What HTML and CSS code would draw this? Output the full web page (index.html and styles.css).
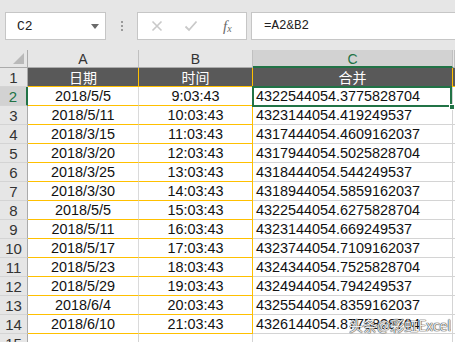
FILE: index.html
```html
<!DOCTYPE html>
<html>
<head>
<meta charset="utf-8">
<link rel="stylesheet" href="styles.css">
</head>
<body>
<div class="app">
  <div class="fbar">
    <div class="namebox"><span class="nm">C2</span><span class="caret"></span></div>
    <div class="grip"><i></i><i></i><i></i></div>
    <div class="fxbox">
      <svg width="12" height="12" viewBox="0 0 12 12" class="ic"><path d="M1.5 1.5 L10.5 10.5 M10.5 1.5 L1.5 10.5" stroke="#c9c9c9" stroke-width="1.6" fill="none"/></svg>
      <svg width="14" height="12" viewBox="0 0 14 12" class="ic"><path d="M1.5 6.5 L5 10 L12.5 1.5" stroke="#c9c9c9" stroke-width="1.8" fill="none"/></svg>
      <span class="fx">f<sub>x</sub></span>
    </div>
    <div class="formula">=A2&amp;B2</div>
  </div>
  <div class="sheet">
    <div class="corner"><span class="tri"></span></div>
    <div class="ch">A</div>
    <div class="ch">B</div>
    <div class="ch sel">C</div>
    <div class="ch d"></div>

    <div class="rh">1</div>
    <div class="hd">日期</div>
    <div class="hd">时间</div>
    <div class="hd">合并</div>
    <div class="hd d"></div>

    <div class="rh rsel">2</div><div class="a">2018/5/5</div><div class="b">9:03:43</div><div class="c">4322544054.3775828704</div><div class="dd"></div>
    <div class="rh">3</div><div class="a">2018/5/11</div><div class="b">10:03:43</div><div class="c">4323144054.419249537</div><div class="dd"></div>
    <div class="rh">4</div><div class="a">2018/3/15</div><div class="b">11:03:43</div><div class="c">4317444054.4609162037</div><div class="dd"></div>
    <div class="rh">5</div><div class="a">2018/3/20</div><div class="b">12:03:43</div><div class="c">4317944054.5025828704</div><div class="dd"></div>
    <div class="rh">6</div><div class="a">2018/3/25</div><div class="b">13:03:43</div><div class="c">4318444054.544249537</div><div class="dd"></div>
    <div class="rh">7</div><div class="a">2018/3/30</div><div class="b">14:03:43</div><div class="c">4318944054.5859162037</div><div class="dd"></div>
    <div class="rh">8</div><div class="a">2018/5/5</div><div class="b">15:03:43</div><div class="c">4322544054.6275828704</div><div class="dd"></div>
    <div class="rh">9</div><div class="a">2018/5/11</div><div class="b">16:03:43</div><div class="c">4323144054.669249537</div><div class="dd"></div>
    <div class="rh">10</div><div class="a">2018/5/17</div><div class="b">17:03:43</div><div class="c">4323744054.7109162037</div><div class="dd"></div>
    <div class="rh">11</div><div class="a">2018/5/23</div><div class="b">18:03:43</div><div class="c">4324344054.7525828704</div><div class="dd"></div>
    <div class="rh">12</div><div class="a">2018/5/29</div><div class="b">19:03:43</div><div class="c">4324944054.794249537</div><div class="dd"></div>
    <div class="rh">13</div><div class="a">2018/6/4</div><div class="b">20:03:43</div><div class="c">4325544054.8359162037</div><div class="dd"></div>
    <div class="rh">14</div><div class="a">2018/6/10</div><div class="b">21:03:43</div><div class="c">4326144054.8775828704</div><div class="dd"></div>
    <div class="rh">15</div><div class="e"></div><div class="e"></div><div class="e"></div><div class="dd"></div>

    <div class="selbox"><span class="handle"></span></div>
    <div class="wm">头条@彩虹Excel</div>
  </div>
</div>
</body>
</html>
```
FILE: styles.css
```css
* { box-sizing: border-box; }
html, body { margin: 0; padding: 0; }
body { width: 455px; height: 342px; overflow: hidden; background: #e6e6e6; font-family: "Liberation Sans", Arial, "Noto Sans CJK SC", sans-serif; }
.app { width: 455px; height: 342px; }
.fbar { height: 50px; display: flex; align-items: flex-start; padding-top: 12px; }
.namebox { margin-left: 5px; width: 101px; height: 28px; background: #fff; border: 1px solid #c6c6c6; display: flex; align-items: center; justify-content: space-between; padding: 0 6px 0 11px; }
.nm { font-family: "Liberation Mono", monospace; font-size: 13px; color: #222; }
.caret { width: 0; height: 0; border-left: 4px solid transparent; border-right: 4px solid transparent; border-top: 5px solid #6a6a6a; }
.grip { width: 31px; height: 28px; display: flex; flex-direction: column; align-items: center; justify-content: center; gap: 2px; }
.grip i { width: 2px; height: 2px; background: #9a9a9a; display: block; }
.fxbox { width: 110px; height: 28px; background: #fff; border: 1px solid #c6c6c6; display: flex; align-items: center; padding-left: 13px; gap: 21px; }
.fx { font-family: "Liberation Serif", serif; font-style: italic; font-size: 15px; color: #6b6b6b; margin-left: 4px; }
.fx sub { font-size: 10px; vertical-align: -1px; }
.formula { margin-left: 4px; flex: 1; height: 28px; background: #fff; border: 1px solid #c6c6c6; border-right: 0; font-family: "Liberation Mono", monospace; font-size: 12.5px; color: #222; padding-left: 12px; line-height: 26px; }

.sheet { position: relative; display: grid; grid-template-columns: 28px 111px 114px 200px 2px; grid-template-rows: 18px 19px repeat(13, 19px) 19px; }
.sheet > div { font-size: 14.4px; line-height: 19px; white-space: nowrap; overflow: hidden; }
.corner { background: #e6e6e6; border-right: 1px solid #ababab; border-bottom: 1px solid #ababab; position: relative; }
.tri { position: absolute; right: 3px; bottom: 3px; width: 0; height: 0; border-left: 11px solid transparent; border-bottom: 11px solid #b9b9b9; }
.ch { background: #e6e6e6; border-right: 1px solid #c0c0c0; border-bottom: 1px solid #ababab; text-align: center; color: #333; font-size: 14px !important; line-height: 18px !important; }
.ch.sel { background: #d2d2d2; border-bottom: 2px solid #217346; color: #217346; }
.rh { background: #e6e6e6; border-right: 1px solid #ababab; border-bottom: 1px solid #d4d4d4; text-align: center; color: #333; font-size: 15px !important; }
.rh.rsel { background: #d2d2d2; border-right: 2px solid #217346; color: #217346; }
.hd { background: #595959; color: #fff; text-align: center; border-right: 1px solid #ffc000; border-bottom: 1px solid #ffc000; font-family: "Noto Sans CJK SC", sans-serif; font-size: 14px !important; line-height: 18px !important; }
.hd.d { border-right: 0; }
.a { background: #fff; text-align: center; color: #111; border-right: 1px solid #dadada; border-bottom: 1px solid #ffc000; }
.b { background: #fff; text-align: center; color: #111; border-right: 1px solid #ffc000; border-bottom: 1px solid #ffc000; }
.c { background: #fff; color: #111; padding-left: 3px; border-right: 1px solid #d4d4d4; border-bottom: 1px solid #d4d4d4; }
.dd { background: #fff; border-bottom: 1px solid #d4d4d4; }
.e { background: #fff; border-right: 1px solid #d4d4d4; border-bottom: 1px solid #d4d4d4; }
.selbox { position: absolute; left: 252px; top: 36px; width: 200px; height: 21px; border: 2px solid #217346; overflow: visible !important; }
.handle { position: absolute; right: -5px; bottom: -5px; width: 6px; height: 6px; background: #217346; border: 1px solid #fff; }
.wm { position: absolute; left: 349px; top: 266px; font-family: "Noto Sans CJK SC", sans-serif; font-size: 14px !important; color: rgba(255,255,255,0.92); text-shadow: 0 0 1px #444, 0 0 1px #444, 0 0 1px #444; }
```
